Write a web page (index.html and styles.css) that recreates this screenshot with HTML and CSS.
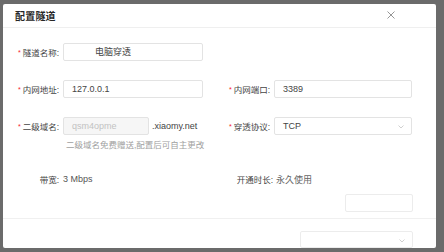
FILE: index.html
```html
<!DOCTYPE html>
<html lang="zh">
<head>
    <meta charset="UTF-8">
    <title>配置隧道</title>
    <link rel="stylesheet" href="styles.css">
</head>
<body>
    <div class="modal">
        <div class="modal-header">
            <span class="modal-title">配置隧道</span>
            <svg class="close" width="8" height="8" viewBox="0 0 8 8"><path d="M0.5 0.5L7.5 7.5M7.5 0.5L0.5 7.5" stroke="#8a8a8a" stroke-width="0.9" fill="none"/></svg>
        </div>

        <div class="modal-body">
            <div class="row">
                <div class="field">
                    <label><i>*</i>隧道名称:</label>
                    <div class="input indent">电脑穿透</div>
                </div>
            </div>

            <div class="row">
                <div class="field">
                    <label><i>*</i>内网地址:</label>
                    <div class="input">127.0.0.1</div>
                </div>
                <div class="field">
                    <label><i>*</i>内网端口:</label>
                    <div class="input">3389</div>
                </div>
            </div>

            <div class="row tight">
                <div class="field">
                    <label><i>*</i>二级域名:</label>
                    <div class="input disabled">qsm4opme</div>
                    <span class="suffix">.xiaomy.net</span>
                </div>
                <div class="field">
                    <label><i>*</i>穿透协议:</label>
                    <div class="input select">TCP
                        <svg class="arrow" width="6" height="4" viewBox="0 0 6 4"><path d="M0.5 0.5L3 3L5.5 0.5" stroke="#c4c4c4" stroke-width="0.8" fill="none"/></svg>
                    </div>
                </div>
            </div>
            <div class="help">二级域名免费赠送,配置后可自主更改</div>

            <div class="row info">
                <div class="field">
                    <label>带宽:</label>
                    <span class="value">3 Mbps</span>
                </div>
                <div class="field">
                    <label>开通时长:</label>
                    <span class="value serif">永久使用</span>
                </div>
            </div>

            <div class="ghost-row">
                <div class="input ghost"></div>
            </div>
        </div>

        <div class="modal-footer">
            <div class="input select ghost-select">
                <svg class="arrow" width="6" height="4" viewBox="0 0 6 4"><path d="M0.5 0.5L3 3L5.5 0.5" stroke="#c4c4c4" stroke-width="0.8" fill="none"/></svg>
            </div>
        </div>
    </div>
</body>
</html>
```

FILE: styles.css
```css
html, body {
    margin: 0;
    width: 444px;
    height: 252px;
    overflow: hidden;
}
body {
    background-color: #6b6b6b;
    font-family: "Liberation Sans", "Noto Sans CJK SC", sans-serif;
    color: #333;
    padding-top: 4px;
    box-sizing: border-box;
}
.modal {
    margin-left: 3px;
    width: 433px;
    height: 244px;
    background-color: #fff;
    border-radius: 2px;
    overflow: hidden;
    display: flex;
    flex-direction: column;
}
.modal-header {
    height: 31px;
    border-bottom: 1px solid #efefef;
    display: flex;
    align-items: center;
    justify-content: space-between;
    padding: 0 41px 0 12px;
}
.modal-title {
    font-size: 10px;
    font-weight: 700;
    color: #262626;
    letter-spacing: 0.2px;
}
.close {
    margin-top: -1px;
}
.modal-body {
    padding: 15px 0 0 14px;
}
.row {
    display: flex;
    gap: 25px;
    margin-bottom: 19px;
}
.row.tight {
    margin-bottom: 4px;
}
.field {
    width: 186px;
    display: flex;
    align-items: center;
    font-size: 9px;
}
.field label {
    width: 46px;
    box-sizing: border-box;
    text-align: right;
    padding-right: 4px;
    font-size: 8.5px;
    color: #444;
    white-space: nowrap;
}
.field label i {
    font-style: normal;
    color: #f5222d;
    font-size: 7px;
    margin-right: 2px;
    vertical-align: 1px;
}
.input {
    width: 140px;
    height: 18px;
    box-sizing: border-box;
    border: 1px solid #e3e3e3;
    border-radius: 2px;
    padding-left: 8px;
    font-size: 9px;
    line-height: 16px;
    color: #444;
    position: relative;
}
.field + .field .input {
    width: 138px;
}
.input.indent {
    padding-left: 31px;
}
.input.disabled {
    width: 86px;
    background-color: #f6f6f6;
    color: #c2c2c2;
}
.suffix {
    margin-left: 3px;
    font-size: 9px;
    color: #444;
}
.arrow {
    position: absolute;
    right: 7px;
    top: 7px;
}
.help {
    margin-left: 49px;
    font-size: 8.5px;
    color: #a0a0a0;
    line-height: 12px;
}
.row.info {
    margin-top: 19px;
    margin-bottom: 0;
    height: 18px;
}
.row.info .field + .field label {
    width: 48px;
    padding-right: 3px;
}
.value {
    font-size: 9px;
    color: #555;
}
.value.serif {
    font-family: "Liberation Serif", "Noto Sans CJK SC", serif;
    color: #666;
}
.ghost-row {
    display: flex;
    justify-content: flex-end;
    padding-right: 23px;
    margin-top: 6px;
}
.input.ghost {
    width: 68px;
    border-color: #ececec;
}
.modal-footer {
    flex: 1;
    margin-top: 6px;
    border-top: 1px solid #f0f0f0;
    display: flex;
    justify-content: flex-end;
    align-items: flex-start;
    padding: 12px 23px 0 0;
}
.input.ghost-select {
    width: 113px;
    height: 17px;
    border-color: #ececec;
}
```
